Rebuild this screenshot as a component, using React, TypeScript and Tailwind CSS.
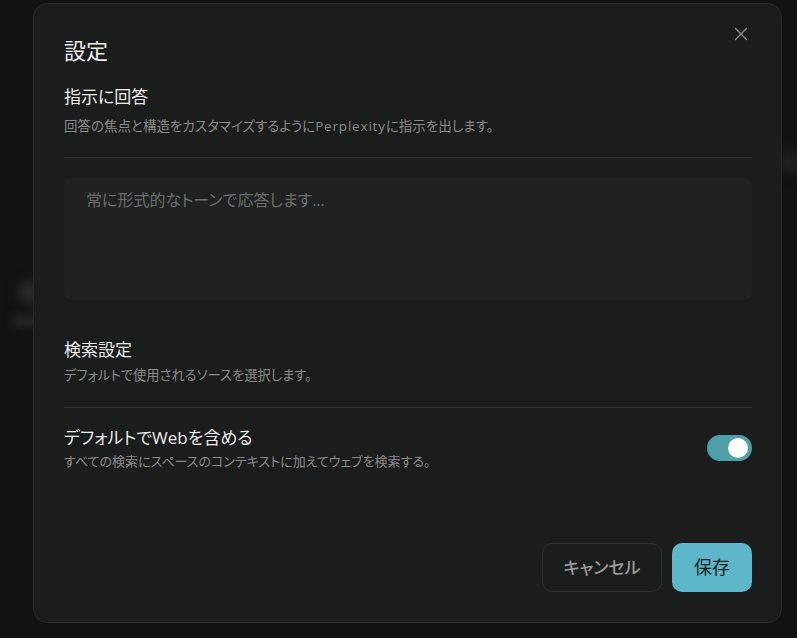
import React from "react";

export default function App() {
  const font = {
    fontFamily: '"Open Sans", "Noto Sans CJK JP", "Noto Sans", sans-serif',
  };
  return (
    <div
      className="relative h-[638px] w-[797px] overflow-hidden bg-[#111212] [font-feature-settings:'palt']"
      style={font}
    >
      {/* blurred background content */}
      <div className="absolute left-[18px] top-[280px] h-[24px] w-[24px] rounded-full bg-[#2a2b2b] blur-[6px]" />
      <div className="absolute left-[12px] top-[316px] h-[10px] w-[30px] rounded-full bg-[#2a2b2b] blur-[5px]" />
      <div className="absolute left-[780px] top-[150px] h-[24px] w-[24px] rounded-full bg-[#1f2020] blur-[6px]" />

      <div className="relative ml-[33px] mt-[3px] flex h-[620px] w-[749px] flex-col rounded-[14px] border border-[#2a2c2c] bg-[#1b1c1c] pl-[30px] pr-[29px] pb-[30px] pt-[32px]">
        <button className="absolute right-[32px] top-[22px] flex h-[16px] w-[16px] items-center justify-center text-[#8c8e8e]">
          <svg width="14" height="14" viewBox="0 0 14 14" fill="none">
            <path d="M1.5 1.5L12.5 12.5M12.5 1.5L1.5 12.5" stroke="currentColor" strokeWidth="1.4" strokeLinecap="round" />
          </svg>
        </button>

        <h1 className="text-[22px] leading-[28px] text-[#ececec]">設定</h1>

        <div className="mt-[21px] text-[17px] font-normal leading-[24px] text-[#ececec]">指示に回答</div>
        <div className="mt-[8px] text-[13.5px] leading-[18px] text-[#8a8b8b]">
          回答の焦点と構造をカスタマイズするように<span className="tracking-[0.06em]">Perplexity</span>に指示を出します。
        </div>

        <div className="mt-[22px] h-px bg-[#2f3131]" />

        <div className="mt-[20px] h-[122px] rounded-[8px] bg-[#202222] px-[22px] pt-[11px] text-[16px] leading-[22px] text-[#6c6e6e]">
          常に形式的なトーンで応答します...
        </div>

        <div className="mt-[38px] text-[17px] font-normal leading-[24px] text-[#ececec]">検索設定</div>
        <div className="mt-[4px] text-[13.3px] leading-[18px] text-[#8a8b8b]">デフォルトで使用されるソースを選択します。</div>

        <div className="mt-[23px] h-px bg-[#2f3131]" />

        <div className="mt-[18px] flex items-center justify-between">
          <div>
            <div className="text-[17px] font-normal leading-[24px] text-[#ececec]">デフォルトでWebを含める</div>
            <div className="mt-[2px] text-[13px] leading-[18px] text-[#8a8b8b]">
              すべての検索にスペースのコンテキストに加えてウェブを検索する。
            </div>
          </div>
          <div className="flex h-[26px] w-[45px] items-center justify-end rounded-full bg-[#4f9fa9] pr-[4px]">
            <div className="h-[20px] w-[20px] rounded-full bg-white" />
          </div>
        </div>

        <div className="mt-auto flex justify-end gap-[10px]">
          <button className="flex h-[49px] w-[120px] items-center justify-center rounded-[10px] border border-[#2f3131] text-[17px] font-medium text-[#9a9b9b]">
            キャンセル
          </button>
          <button className="flex h-[49px] w-[80px] items-center justify-center rounded-[10px] bg-[#5db7c9] text-[18px] text-[#1d2223]">
            保存
          </button>
        </div>
      </div>
    </div>
  );
}
